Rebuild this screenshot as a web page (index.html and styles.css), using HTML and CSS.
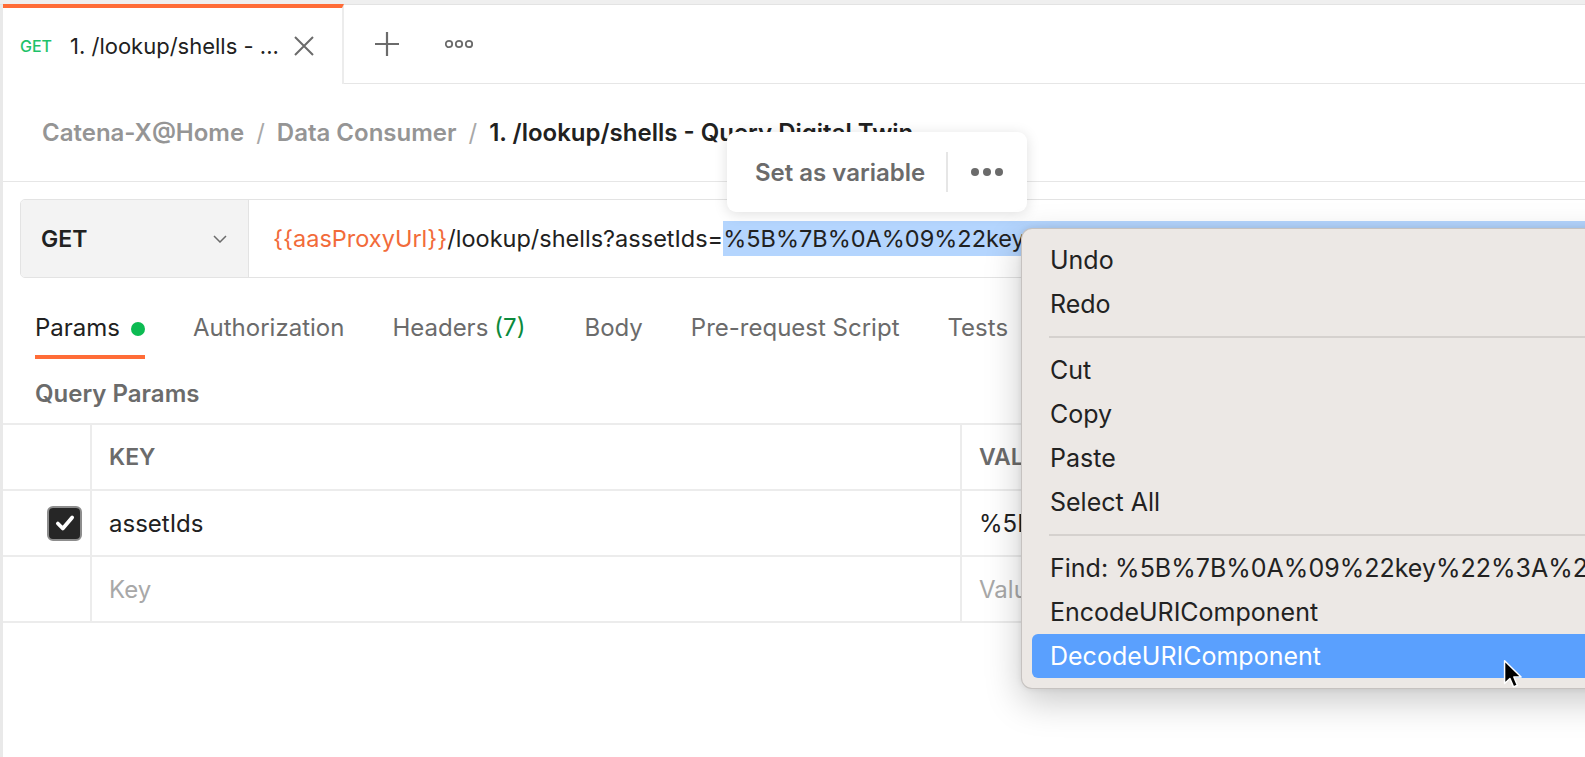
FILE: index.html
```html
<!DOCTYPE html>
<html lang="en">
<head>
<meta charset="utf-8">
<title>Postman request</title>
<link rel="stylesheet" href="styles.css">
</head>
<body>
<div class="app">
  <div class="topstrip"></div>
  <div class="tabbar">
    <div class="tab">
      <span class="tab-method">GET</span>
      <span class="tab-title">1. /lookup/shells - ...</span>
      <svg class="tab-close" viewBox="0 0 22 22" width="22" height="22"><path d="M2 2 L20 20 M20 2 L2 20" stroke="#6b6b6b" stroke-width="2" fill="none"/></svg>
    </div>
    <svg class="tab-plus" viewBox="0 0 24 24" width="24" height="24"><path d="M12 0 V24 M0 12 H24" stroke="#6b6b6b" stroke-width="2.2" fill="none"/></svg>
    <svg class="tab-more" viewBox="0 0 28 10" width="28" height="10"><circle cx="4" cy="5" r="3.2" stroke="#6b6b6b" stroke-width="1.8" fill="none"/><circle cx="14" cy="5" r="3.2" stroke="#6b6b6b" stroke-width="1.8" fill="none"/><circle cx="24" cy="5" r="3.2" stroke="#6b6b6b" stroke-width="1.8" fill="none"/></svg>
  </div>

  <div class="breadcrumb">
    <span class="crumb">Catena-X@Home</span>
    <span class="sep">/</span>
    <span class="crumb">Data Consumer</span>
    <span class="sep">/</span>
    <span class="crumb current">1. /lookup/shells - Query Digital Twin</span>
  </div>

  <div class="urlrow">
    <div class="urlbox">
      <div class="method">
        <span>GET</span>
        <svg viewBox="0 0 14 8" width="14" height="8"><path d="M1 1 L7 7 L13 1" stroke="#6b6b6b" stroke-width="1.5" fill="none"/></svg>
      </div>
      <div class="urlinput"><span class="var">{{aasProxyUrl}}</span>/lookup/shells?assetIds=<span class="sel">%5B%7B%0A%09%22key%22%3A%22globalAssetId%22%2C%0A%09%22value%22%3A%22urn%3Auuid%3A</span></div>
    </div>
  </div>

  <div class="reqtabs">
    <div class="rtab active">Params <span class="dot"></span></div>
    <div class="rtab">Authorization</div>
    <div class="rtab">Headers <span class="count">(7)</span></div>
    <div class="rtab body">Body</div>
    <div class="rtab">Pre-request Script</div>
    <div class="rtab">Tests</div>
    <div class="rtab">Settings</div>
  </div>

  <div class="section-title">Query Params</div>

  <div class="params">
    <div class="cell chk"></div>
    <div class="cell head">KEY</div>
    <div class="cell head">VALUE</div>

    <div class="cell chk"><span class="checkbox"><svg viewBox="0 0 20 20" width="22" height="22"><path d="M3.5 10.5 L8 15 L16.5 5" stroke="#fff" stroke-width="3.4" fill="none" stroke-linecap="round" stroke-linejoin="round"/></svg></span></div>
    <div class="cell">assetIds</div>
    <div class="cell">%5B%7B%0A%09%22key%22%3A%22globalAssetId%22</div>

    <div class="cell chk"></div>
    <div class="cell ph">Key</div>
    <div class="cell ph">Value</div>
  </div>
</div>

<div class="popup">
  <span class="popup-label">Set as variable</span>
  <span class="popup-div"></span>
  <svg viewBox="0 0 32 8" width="32" height="8"><circle cx="4" cy="4" r="4" fill="#6b6b6b"/><circle cx="16" cy="4" r="4" fill="#6b6b6b"/><circle cx="28" cy="4" r="4" fill="#6b6b6b"/></svg>
</div>

<div class="ctxmenu">
  <div class="mi">Undo</div>
  <div class="mi">Redo</div>
  <div class="msep"></div>
  <div class="mi">Cut</div>
  <div class="mi">Copy</div>
  <div class="mi">Paste</div>
  <div class="mi">Select All</div>
  <div class="msep"></div>
  <div class="mi">Find: %5B%7B%0A%09%22key%22%3A%22globalAssetId%22</div>
  <div class="mi">EncodeURIComponent</div>
  <div class="mi hl">DecodeURIComponent</div>
</div>

<svg class="cursor" viewBox="0 0 19 28" width="20" height="30"><path d="M1.5 1.5 L1.5 23 L6.6 18.2 L10 26.2 L13.6 24.7 L10.3 16.9 L17.2 16.9 Z" fill="#000" stroke="#fff" stroke-width="1.4" stroke-linejoin="round"/></svg>
</body>
</html>
```

FILE: styles.css
```css
* { box-sizing: border-box; }
html, body {
  margin: 0;
  padding: 0;
}
body {
  width: 1585px;
  height: 757px;
  overflow: hidden;
  position: relative;
  background: #fff;
  font-family: Inter, "Noto Sans", "Liberation Sans", sans-serif;
  color: #212121;
}
.app {
  height: 757px;
  border-left: 3px solid #e9e9e9;
}
.topstrip {
  height: 5px;
  background: #efefef;
  border-bottom: 1px solid #e3e3e3;
  margin-left: -3px;
}
.tabbar {
  height: 80px;
  margin-top: -1px;
  display: flex;
  align-items: center;
  border-bottom: 1px solid #e6e6e6;
}
.tab {
  width: 341px;
  height: 80px;
  margin-bottom: -1px;
  background: #fff;
  border-top: 4px solid #ff6c37;
  border-right: 2px solid #ececec;
  display: flex;
  align-items: center;
  padding-left: 17px;
}
.tab-method {
  color: #1ec26a;
  font-size: 16px;
  font-weight: 500;
  width: 50px;
}
.tab-title {
  font-size: 22px;
  color: #212121;
  width: 223px;
  white-space: nowrap;
}
.tab-close { display: block; }
.tab-plus { margin-left: 31px; }
.tab-more { margin-left: 46px; }

.breadcrumb {
  height: 98px;
  border-bottom: 1px solid #e6e6e6;
  display: flex;
  align-items: center;
  padding-left: 39px;
  font-size: 24px;
  font-weight: 600;
  color: #959595;
  white-space: nowrap;
}
.breadcrumb .sep {
  margin: 0 12px;
  font-weight: 400;
  color: #a8a8a8;
}
.breadcrumb .current { color: #212121; }

.urlrow {
  padding: 17px 0 0 17px;
}
.urlbox {
  display: flex;
  height: 79px;
  width: 1700px;
  border: 1px solid #e3e3e3;
  border-radius: 5px;
  overflow: hidden;
}
.method {
  flex: 0 0 228px;
  background: #f3f3f3;
  border-right: 1px solid #e3e3e3;
  display: flex;
  align-items: center;
  justify-content: space-between;
  padding: 0 21px 0 20px;
  font-size: 23px;
  font-weight: 600;
}
.urlinput {
  flex: 1;
  min-width: 0;
  display: flex;
  align-items: center;
  padding-left: 24px;
  font-size: 23.5px;
  white-space: nowrap;
  overflow: hidden;
}
.urlinput .var { color: #f26b3a; }
.urlinput .sel {
  background: #b4d5fe;
  line-height: 35px;
}

.reqtabs {
  display: flex;
  padding: 26px 0 0 32px;
  gap: 48px;
}
.rtab {
  height: 55px;
  line-height: 48px;
  font-size: 24px;
  color: #6b6b6b;
  border-bottom: 4px solid transparent;
  white-space: nowrap;
  display: flex;
  align-items: flex-start;
}
.rtab.active {
  color: #212121;
  border-bottom-color: #ff6c37;
}
.rtab.body { margin-left: 11px; }
.rtab .dot {
  width: 14px;
  height: 14px;
  border-radius: 50%;
  background: #0cbb52;
  margin: 18px 0 0 11px;
}
.rtab .count { color: #0b8a3c; margin-left: 6px; }

.section-title {
  padding: 21px 0 0 32px;
  line-height: 28px;
  height: 64px;
  font-size: 24px;
  font-weight: 600;
  color: #6b6b6b;
}

.params {
  display: grid;
  grid-template-columns: 89px 870px 700px;
  border-top: 2px solid #ececec;
}
.cell {
  height: 66px;
  border-bottom: 2px solid #ececec;
  border-right: 2px solid #ececec;
  display: flex;
  align-items: center;
  padding-left: 17px;
  font-size: 24px;
  white-space: nowrap;
  overflow: hidden;
}
.cell.head {
  font-weight: 600;
  color: #6b6b6b;
  font-size: 23px;
}
.cell.ph { color: #a8a8a8; }
.cell.chk {
  justify-content: flex-end;
  padding: 0 8px 0 0;
}
.checkbox {
  width: 35px;
  height: 35px;
  border-radius: 6px;
  background: #262626;
  border: 2px solid #8d8d8d;
  display: flex;
  align-items: center;
  justify-content: center;
}

.popup {
  position: absolute;
  left: 727px;
  top: 132px;
  width: 300px;
  height: 80px;
  background: #fff;
  border-radius: 9px;
  box-shadow: 0 2px 14px rgba(0, 0, 0, 0.13);
  display: flex;
  align-items: center;
  padding-left: 28px;
}
.popup-label {
  font-size: 24px;
  font-weight: 600;
  color: #6b6b6b;
  white-space: nowrap;
}
.popup-div {
  width: 2px;
  height: 40px;
  background: #e6e6e6;
  margin: 0 23px 0 21px;
}

.ctxmenu {
  position: absolute;
  left: 1021px;
  top: 228px;
  width: 640px;
  height: 461px;
  background: #ece8e5;
  border: 1px solid rgba(0, 0, 0, 0.16);
  border-radius: 11px;
  box-shadow: 0 12px 36px rgba(0, 0, 0, 0.22), 0 0 6px rgba(0, 0, 0, 0.08);
  padding: 9px 0 10px 10px;
  font-size: 25px;
  color: #222;
}
.mi {
  height: 44px;
  line-height: 44px;
  padding-left: 18px;
  white-space: nowrap;
  border-radius: 6px;
}
.mi.hl {
  background: #5aa0fe;
  color: #fff;
}
.msep {
  height: 22px;
  margin-left: 17px;
  position: relative;
}
.msep::after {
  content: "";
  position: absolute;
  left: 0;
  right: 0;
  top: 10px;
  height: 2px;
  background: #d5d1ce;
}
.cursor {
  position: absolute;
  left: 1503px;
  top: 659px;
}
```
